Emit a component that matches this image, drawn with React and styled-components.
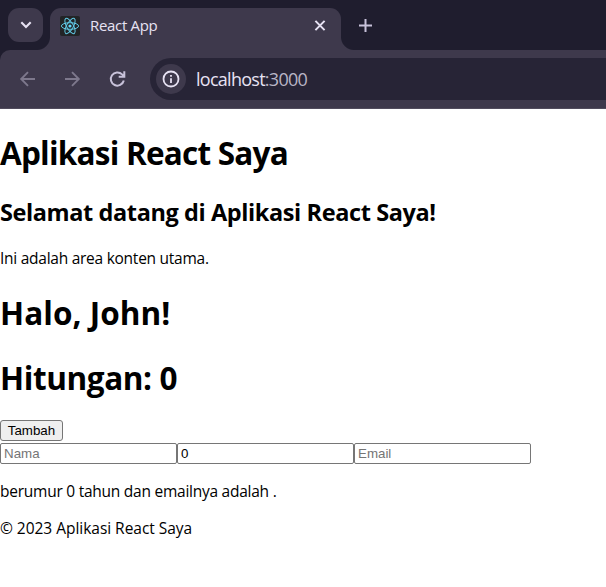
import React, { useState } from "react";
import styled, { createGlobalStyle } from "styled-components";

const GlobalStyle = createGlobalStyle`
  *, *::before, *::after { box-sizing: border-box; }
  html { background: #fff; }
  body { margin: 0; overflow: hidden; font-family: "Open Sans", "Noto Sans", sans-serif; }
`;

const FRAME = "#3e394c";
const STRIP = "#1f1d2e";

const TabStrip = styled.div`
  display: flex;
  height: 50px;
  padding: 8px 0 0 8px;
  background: ${STRIP};
`;

const TabSearch = styled.div`
  display: grid;
  place-items: center;
  width: 35px;
  height: 34px;
  margin-right: 7px;
  border-radius: 11px;
  background: ${FRAME};
`;

const Tab = styled.div`
  position: relative;
  display: flex;
  align-items: center;
  width: 291px;
  height: 42px;
  padding: 0 14px 7px 10px;
  border-radius: 11px 11px 0 0;
  background: ${FRAME};

  &::before, &::after {
    content: "";
    position: absolute;
    bottom: 0;
    width: 13px;
    height: 13px;
  }
  &::before {
    right: 100%;
    background: radial-gradient(circle at 0 0, transparent 12.5px, ${FRAME} 13.5px);
  }
  &::after {
    left: 100%;
    background: radial-gradient(circle at 100% 0, transparent 12.5px, ${FRAME} 13.5px);
  }
`;

const Favicon = styled.svg`
  flex: none;
  border-radius: 2px;
  background: #222426;
`;

const TabTitle = styled.span`
  flex: 1;
  margin: 0 0 2px 10px;
  color: #e7e2f3;
  font-size: 15px;
  line-height: 20px;
  letter-spacing: -0.32px;
`;

const NewTab = styled.div`
  display: grid;
  place-items: center;
  width: 49px;
  height: 34px;
`;

const ToolbarBack = styled.div`
  background: ${STRIP};
`;

const Toolbar = styled.div`
  display: flex;
  align-items: center;
  height: 59px;
  padding-left: 18px;
  border-top-left-radius: 10px;
  border-bottom: 1px solid #514c5d;
  background: ${FRAME};
`;

const NavButton = styled.div`
  display: grid;
  place-items: center;
  width: 20px;
  height: 20px;
  margin-right: ${(p) => p.$gap}px;
`;

const AddressBar = styled.div`
  flex: 1;
  display: flex;
  align-items: center;
  height: 42px;
  padding-left: 6px;
  border-radius: 21px 0 0 21px;
  background: #272436;
`;

const SiteInfo = styled.div`
  display: grid;
  place-items: center;
  width: 30px;
  height: 30px;
  border-radius: 50%;
  background: ${FRAME};
`;

const Url = styled.span`
  margin-left: 10px;
  color: #e7e2f3;
  font-size: 18px;
  line-height: 24px;
  letter-spacing: -0.73px;
`;

const Port = styled.span`
  color: #b9b5c6;
`;

const Page = styled.div`
  display: flow-root;
  color: #000;
`;

const Heading = styled.h1`
  margin: 22px 0;
  font-size: 31.5px;
  line-height: 43px;
  font-weight: 700;
  letter-spacing: ${(p) => p.$track}px;
  white-space: nowrap;
`;

const Subheading = styled.h2`
  margin: 19.5px 0;
  font-size: 23.5px;
  line-height: 32px;
  font-weight: 700;
  letter-spacing: -0.4px;
  white-space: nowrap;
`;

const Paragraph = styled.p`
  margin: 17px 0 16px;
  font-size: 15.5px;
  line-height: 21px;
  letter-spacing: ${(p) => p.$track}px;
  white-space: nowrap;
`;

const Footer = styled(Paragraph)`
  margin-top: 16px;
`;

const CountButton = styled.button`
  display: block;
  width: 63px;
  height: 21px;
  margin: 21px 0 2px;
  padding: 0;
  border: 1px solid #767676;
  border-radius: 3px;
  background: #efefef;
  color: #000;
  font: 13.333px/19px "Liberation Sans", Arial, sans-serif;
`;

const CountHeading = styled(Heading)`
  margin-bottom: 21px;
`;

const Fields = styled.div`
  display: flex;
`;

const Field = styled.input`
  width: 177px;
  height: 21px;
  padding: 1px 2px 1px 3px;
  border: 1px solid #767676;
  border-radius: 2px;
  background: #fff;
  color: #000;
  font: 13.333px "Liberation Sans", Arial, sans-serif;
  outline: none;

  &::placeholder { color: #757575; }
`;

export default function App() {
  const [count, setCount] = useState(0);
  const [name, setName] = useState("");
  const [age, setAge] = useState("0");
  const [email, setEmail] = useState("");

  return (
    <>
      <GlobalStyle />
      <TabStrip>
        <TabSearch>
          <svg width="12" height="8" viewBox="0 0 12 8" fill="none" stroke="#e7e2f3" strokeWidth="2.1">
            <path d="M1.3 1.2 6 5.9l4.7-4.7" />
          </svg>
        </TabSearch>
        <Tab>
          <Favicon width="20" height="20" viewBox="0 0 20 20" fill="none" stroke="#61c9e4" strokeWidth="1">
            <ellipse cx="10" cy="10" rx="8.6" ry="3.3" />
            <ellipse cx="10" cy="10" rx="8.6" ry="3.3" transform="rotate(60 10 10)" />
            <ellipse cx="10" cy="10" rx="8.6" ry="3.3" transform="rotate(120 10 10)" />
            <circle cx="10" cy="10" r="1.6" fill="#61dafb" stroke="none" />
          </Favicon>
          <TabTitle>React App</TabTitle>
          <svg width="14" height="14" viewBox="0 0 14 14" stroke="#e7e2f3" strokeWidth="2">
            <path d="m2.4 1.9 9.2 9.2m0-9.2-9.2 9.2" />
          </svg>
        </Tab>
        <NewTab>
          <svg width="15" height="15" viewBox="0 0 15 15" stroke="#c8c2da" strokeWidth="2">
            <path d="M7.5 1v13M1 7.5h13" />
          </svg>
        </NewTab>
      </TabStrip>
      <ToolbarBack>
        <Toolbar>
          <NavButton $gap={24}>
            <svg width="20" height="20" viewBox="0 0 20 20" fill="none" stroke="#7d788c" strokeWidth="1.9">
              <path d="M17 10H3.5M10 3.2 3.2 10l6.8 6.8" />
            </svg>
          </NavButton>
          <NavButton $gap={26}>
            <svg width="20" height="20" viewBox="0 0 20 20" fill="none" stroke="#7d788c" strokeWidth="1.9">
              <path d="M3 10h13.5M10 3.2l6.8 6.8-6.8 6.8" />
            </svg>
          </NavButton>
          <NavButton $gap={22}>
            <svg width="20" height="20" viewBox="0 0 20 20" fill="none" stroke="#c8c2da" strokeWidth="2">
              <path d="M15.8 11.6a6.6 6.6 0 1 1-1.7-6.2l2.1 2.1M16.3 2.2v5.6h-5.6" />
            </svg>
          </NavButton>
          <AddressBar>
            <SiteInfo>
              <svg width="18" height="18" viewBox="0 0 18 18" fill="none" stroke="#e7e2f3" strokeWidth="1.8">
                <circle cx="9" cy="9" r="7.5" />
                <path d="M9 8.2V13M9 5v1.8" />
              </svg>
            </SiteInfo>
            <Url>localhost<Port>:3000</Port></Url>
          </AddressBar>
        </Toolbar>
      </ToolbarBack>
      <Page>
        <Heading $track={-0.78}>Aplikasi React Saya</Heading>
        <Subheading>Selamat datang di Aplikasi React Saya!</Subheading>
        <Paragraph $track={-0.26}>Ini adalah area konten utama.</Paragraph>
        <Heading $track={0.05}>Halo, John!</Heading>
        <CountHeading $track={-0.4}>Hitungan: {count}</CountHeading>
        <CountButton onClick={() => setCount(count + 1)}>Tambah</CountButton>
        <Fields>
          <Field placeholder="Nama" value={name} onChange={(e) => setName(e.target.value)} />
          <Field value={age} onChange={(e) => setAge(e.target.value)} />
          <Field placeholder="Email" value={email} onChange={(e) => setEmail(e.target.value)} />
        </Fields>
        <Paragraph $track={-0.25}>{name} berumur {age} tahun dan emailnya adalah {email}.</Paragraph>
        <Footer $track={-0.03}>© 2023 Aplikasi React Saya</Footer>
      </Page>
    </>
  );
}
